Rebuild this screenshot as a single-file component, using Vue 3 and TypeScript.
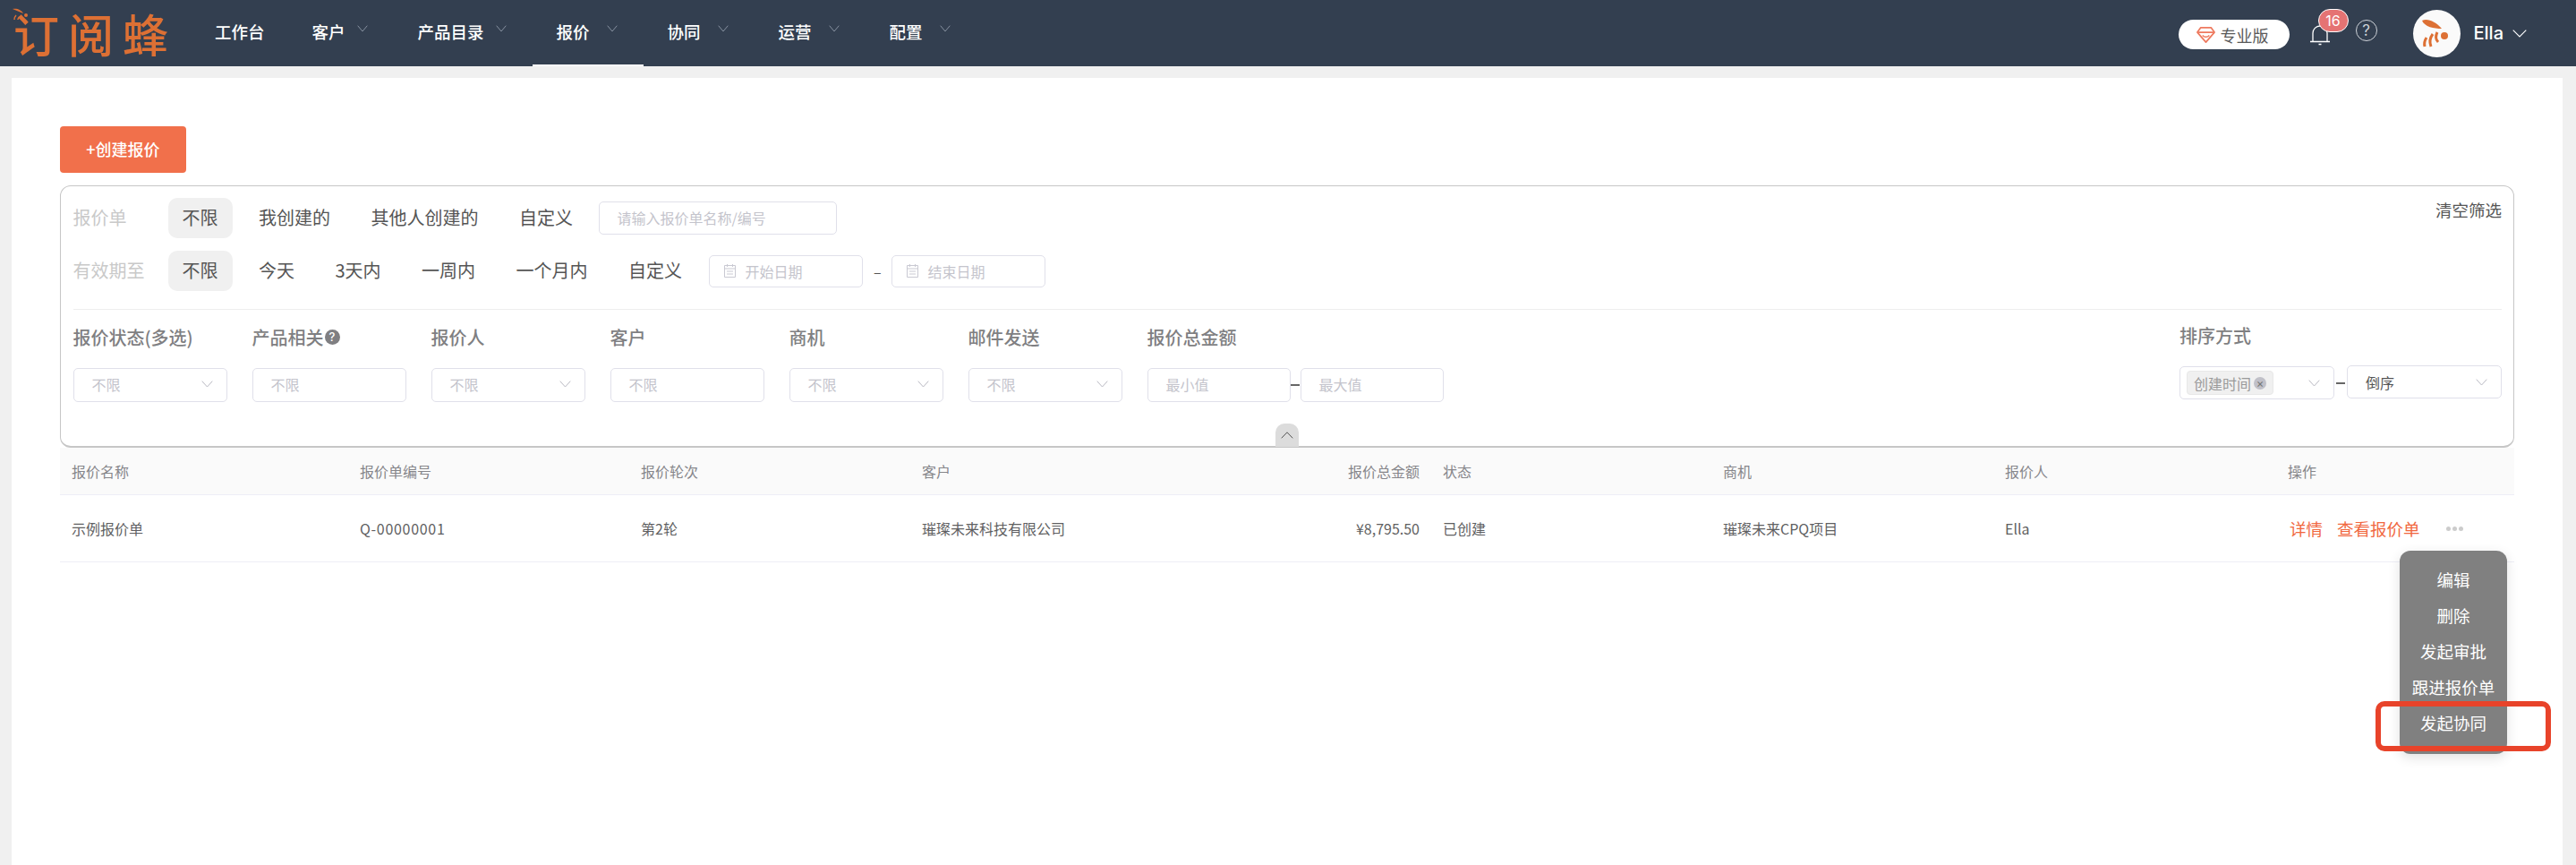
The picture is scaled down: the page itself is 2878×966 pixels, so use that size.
<script setup lang="ts">
const navItems = [
  { text: '客户', gap: 'gap-sm' },
  { text: '产品目录', gap: 'gap-sm' },
  { text: '报价', gap: 'gap-lg', active: true },
  { text: '协同', gap: 'gap-lg' },
  { text: '运营', gap: 'gap-lg' },
  { text: '配置', gap: 'gap-lg' },
]
const rowOne = ['我创建的', '其他人创建的', '自定义']
const rowTwo = ['今天', '3天内', '一周内', '一个月内', '自定义']
const fields = [
  { label: '报价状态(多选)', arrow: true },
  { label: '产品相关', arrow: false, help: true },
  { label: '报价人', arrow: true },
  { label: '客户', arrow: false },
  { label: '商机', arrow: true },
  { label: '邮件发送', arrow: true },
]
const columns = ['报价名称', '报价单编号', '报价轮次', '客户', '报价总金额', '状态', '商机', '报价人', '操作']
const cells = ['示例报价单', 'Q-00000001', '第2轮', '璀璨未来科技有限公司', '¥8,795.50', '已创建', '璀璨未来CPQ项目', 'Ella']
const menu = ['编辑', '删除', '发起审批', '跟进报价单', '发起协同']
</script>

<template>
  <div class="page">
    <header class="topbar">
      <div class="logo">
        <span class="logo-text">订阅蜂</span>
        <svg class="logo-wave" width="20" height="20" viewBox="0 0 20 20" fill="none">
          <path d="M1 2c5-1 10 1 12 5-4-2-8-3-12-5z" fill="#dd7034" />
          <path d="M3 14c0-2 1-4 2-5M7 14c0-1 1-3 2-3" stroke="#dd7034" stroke-width="1.5" />
          <circle cx="16" cy="9" r="2" fill="#dd7034" />
        </svg>
      </div>
      <nav class="nav">
        <a class="nav-item plain">工作台</a>
        <a v-for="item in navItems" :key="item.text" class="nav-item" :class="[item.gap, { active: item.active }]">
          <span>{{ item.text }}</span>
          <svg class="nav-chev" width="12" height="8" viewBox="0 0 12 8" fill="none"><path d="M.7.7 6 7l5.3-6.3" stroke="#8791a0" stroke-width="1" /></svg>
        </a>
      </nav>
      <div class="top-right">
        <div class="pro-pill">
          <svg width="22" height="22" viewBox="0 0 22 22" fill="none">
            <path d="M5 3h12l4 5.5L11 20 1 8.500z" stroke="#ee7a5f" stroke-width="1.800" stroke-linejoin="round" />
            <path d="M1.500 8.500h19M7 12c2 2.500 6 2.500 8 0" stroke="#ee7a5f" stroke-width="1.600" />
          </svg>
          <span>专业版</span>
        </div>
        <div class="bell-wrap">
          <svg width="24" height="26" viewBox="0 0 24 26" fill="none">
            <path d="M4 20V11a8 8 0 0 1 16 0v9M1 20.500h22" stroke="#fff" stroke-width="1.300" />
            <path d="M10.500 23.500h3" stroke="#fff" stroke-width="1.500" />
          </svg>
          <span class="badge">16</span>
        </div>
        <span class="help">?</span>
        <div class="avatar">
          <svg width="36" height="36" viewBox="0 0 36 36" fill="none">
            <path d="M2 4c6-3 15 1 22 9C15 13 5 11 2 4z" fill="#dd7034" />
            <circle cx="27" cy="21" r="4" fill="#dd7034" />
            <path d="M5 33c-1-4 0-7 2-10M12 33c-2-5-1-10 2-14M20 28c-3-3-3-7-1-11" stroke="#dd7034" stroke-width="3" />
          </svg>
        </div>
        <span class="user">Ella</span>
        <svg width="16" height="9" viewBox="0 0 16 9" fill="none"><path d="M.7.700 8 8l7.300-7.300" stroke="#fff" stroke-width="1.100" /></svg>
      </div>
    </header>

    <main class="card">
      <button class="create">+创建报价</button>

      <section class="filter">
        <div class="quick-row">
          <span class="quick-label">报价单</span>
          <span class="chip selected">不限</span>
          <span v-for="t in rowOne" :key="t" class="chip">{{ t }}</span>
          <div class="box name-box">请输入报价单名称/编号</div>
          <span class="clear">清空筛选</span>
        </div>
        <div class="quick-row">
          <span class="quick-label">有效期至</span>
          <span class="chip selected">不限</span>
          <span v-for="t in rowTwo" :key="t" class="chip">{{ t }}</span>
          <div class="box date-box">
            <svg width="15" height="17" viewBox="0 0 15 17" fill="none"><path d="M1.500 2.500h12v13h-12zM1.500 6h12M4.500 1v3M10.500 1v3M4 9h7M4 12h7" stroke="#c9c9d2" stroke-width="1" /></svg>
            <span>开始日期</span>
          </div>
          <span class="date-dash">–</span>
          <div class="box date-box">
            <svg width="15" height="17" viewBox="0 0 15 17" fill="none"><path d="M1.500 2.500h12v13h-12zM1.500 6h12M4.500 1v3M10.500 1v3M4 9h7M4 12h7" stroke="#c9c9d2" stroke-width="1" /></svg>
            <span>结束日期</span>
          </div>
        </div>

        <div class="divider"></div>

        <div class="fields">
          <div v-for="f in fields" :key="f.label" class="field">
            <div class="field-label">
              {{ f.label }}<span v-if="f.help" class="tip">?</span>
            </div>
            <div class="box select">
              <span>不限</span>
              <svg v-if="f.arrow" width="13" height="8" viewBox="0 0 13 8" fill="none"><path d="M.7.700 6.500 7l5.800-6.300" stroke="#b9b9c2" stroke-width="1" /></svg>
            </div>
          </div>
          <div class="field range">
            <div class="field-label">报价总金额</div>
            <div class="range-row">
              <div class="box range-box">最小值</div>
              <span class="range-dash"></span>
              <div class="box range-box">最大值</div>
            </div>
          </div>
          <div class="field sort">
            <div class="field-label">排序方式</div>
            <div class="sort-row">
              <div class="box sort-box lower">
                <span class="tag">创建时间<i class="tag-x">×</i></span>
                <svg width="13" height="8" viewBox="0 0 13 8" fill="none"><path d="M.7.700 6.500 7l5.800-6.300" stroke="#b9b9c2" stroke-width="1" /></svg>
              </div>
              <span class="range-dash sort-dash"></span>
              <div class="box sort-box order">
                <span>倒序</span>
                <svg width="13" height="8" viewBox="0 0 13 8" fill="none"><path d="M.7.700 6.500 7l5.800-6.300" stroke="#b9b9c2" stroke-width="1" /></svg>
              </div>
            </div>
          </div>
        </div>

        <div class="collapse">
          <svg width="14" height="8" viewBox="0 0 14 8" fill="none"><path d="M.7 7.300 7 .8l6.300 6.500" stroke="#555" stroke-width="1" /></svg>
        </div>
      </section>

      <section class="table">
        <div class="t-row t-head">
          <div v-for="(c, i) in columns" :key="c" class="t-cell" :class="{ right: i === 4 }">{{ c }}</div>
        </div>
        <div class="t-row t-body">
          <div v-for="(c, i) in cells" :key="c" class="t-cell" :class="{ right: i === 4, code: i === 1 }">{{ c }}</div>
          <div class="t-cell actions">
            <a>详情</a>
            <a>查看报价单</a>
            <span class="dots"><i></i><i></i><i></i></span>
            <div class="menu">
              <div v-for="m in menu" :key="m" class="menu-item">{{ m }}</div>
              <div class="highlight"></div>
            </div>
          </div>
        </div>
      </section>
    </main>
  </div>
</template>

<style>
html, body { margin: 0; background: #f0f0f0; }
</style>

<style scoped>
.page {
  width: 2878px;
  height: 966px;
  overflow: hidden;
  background: #f0f0f0;
  font-family: "Noto Sans CJK SC", "Noto Sans", sans-serif;
  color: #555;
}
.topbar {
  height: 74px;
  background: #333f50;
  display: flex;
  align-items: center;
}
.logo {
  width: 213px;
  height: 74px;
  padding: 0 0 0 15px;
  box-sizing: border-box;
  position: relative;
  flex: none;
  display: flex;
  align-items: center;
}
.logo-text {
  font-size: 51px;
  line-height: 74px;
  color: #dd7034;
  font-weight: 500;
  letter-spacing: 10px;
  white-space: nowrap;
}
.logo-wave {
  position: absolute;
  left: 13px;
  top: 8px;
}
.nav { display: flex; height: 74px; }
.nav-item {
  display: flex;
  align-items: center;
  padding: 0 29px 4px 27px;
  font-size: 18.500px;
  font-weight: 500;
  color: #fff;
  box-sizing: border-box;
}
.nav-item.plain { padding-right: 26px; }
.gap-sm .nav-chev { margin-left: 13px; }
.gap-lg .nav-chev { margin-left: 19px; }
.nav-chev { margin-top: -6px; }
.nav-item.active { border-bottom: 2px solid #fff; padding-bottom: 2px; }
.top-right {
  margin-left: auto;
  display: flex;
  align-items: center;
  padding-right: 55px;
}
.pro-pill {
  width: 124px;
  height: 33px;
  border-radius: 17px;
  background: #fff;
  display: flex;
  align-items: center;
  gap: 6px;
  padding-left: 20px;
  box-sizing: border-box;
  font-size: 18px;
  color: #5a5a5a;
  margin-top: 3px;
}
.pro-pill svg { width: 21px; height: 21px; }
.bell-wrap {
  position: relative;
  width: 24px;
  height: 26px;
  margin-left: 22px;
  margin-top: 4px;
}
.badge {
  position: absolute;
  left: 10px;
  top: -16px;
  width: 34px;
  height: 26px;
  box-sizing: border-box;
  border: 1px solid #fff;
  border-radius: 13px;
  background: #e57373;
  color: #fff;
  font-size: 16px;
  line-height: 24px;
  text-align: center;
  font-family: Inter, sans-serif;
}
.help {
  width: 24px;
  height: 24px;
  margin-left: 28px;
  margin-top: -6px;
  box-sizing: border-box;
  border: 1px solid #cfd3d9;
  border-radius: 50%;
  color: #cfd3d9;
  font-size: 17px;
  line-height: 22px;
  text-align: center;
  font-family: Inter, sans-serif;
}
.avatar {
  width: 53px;
  height: 53px;
  margin-left: 40px;
  border-radius: 50%;
  background: #fafafa;
  display: flex;
  align-items: center;
  justify-content: center;
  flex: none;
}
.user {
  margin-left: 15px;
  margin-right: 10px;
  font-family: Inter, sans-serif;
  font-size: 20px;
  font-weight: 500;
  color: #fff;
}
.card {
  margin: 13px 15px 0 13px;
  height: 879px;
  background: #fff;
  padding: 54px 54px 0;
  box-sizing: border-box;
}
.create {
  display: block;
  width: 141px;
  height: 52px;
  border: 0;
  border-radius: 4px;
  background: #f1704b;
  color: #fff;
  font: 500 18px "Noto Sans CJK SC", sans-serif;
  padding: 0 0 2px;
}
.filter {
  margin-top: 14px;
  border: 1px solid #c6c6c6;
  border-bottom-width: 2px;
  border-radius: 12px;
  padding: 13px 13px 0 13.500px;
  box-sizing: border-box;
  height: 293px;
}
.quick-row {
  display: flex;
  align-items: center;
  gap: 13.500px;
  height: 45px;
  font-size: 20px;
  margin-bottom: 14px;
  color: #555;
}
.quick-label {
  width: 92.500px;
  color: #c9c9c9;
  flex: none;
  padding-bottom: 2px;
}
.chip {
  padding: 0 16px;
  height: 45px;
  line-height: 43px;
  border-radius: 10px;
  box-sizing: border-box;
}
.chip.selected { background: #f0f0f0; }
.box {
  border: 1px solid #e0e0ea;
  border-radius: 5px;
  box-sizing: border-box;
  font-size: 16px;
  color: #c4c4cc;
  display: flex;
  align-items: center;
}
.name-box {
  width: 266px;
  height: 37px;
  padding: 0 0 2px 20px;
  margin-left: -1px;
}
.date-box {
  width: 172px;
  height: 36px;
  padding: 0 0 0 15px;
  gap: 10px;
}
.date-dash {
  width: 7px;
  text-align: center;
  font-size: 16px;
  margin: 0 -1px;
}
.clear {
  margin-left: auto;
  align-self: flex-start;
  line-height: 26px;
  font-size: 18.500px;
  color: #555;
}
.divider {
  height: 1px;
  background: #eeeeee;
  margin-top: 20px;
}
.fields {
  display: flex;
  gap: 28px;
  margin-top: 17px;
}
.field { width: 172px; flex: none; }
.field-label {
  height: 28px;
  padding-bottom: 2px;
  box-sizing: border-box;
  font-size: 20px;
  font-weight: 500;
  color: #7f7f82;
  white-space: nowrap;
  display: flex;
  align-items: center;
}
.tip {
  width: 17px;
  height: 17px;
  margin-left: 1px;
  border-radius: 50%;
  background: #7f7f82;
  color: #fff;
  font-size: 13px;
  line-height: 17px;
  text-align: center;
  font-family: Inter, sans-serif;
}
.select {
  height: 38px;
  margin-top: 20px;
  padding: 0 15px 2px 20px;
  justify-content: space-between;
}
.range { width: auto; }
.range-row { display: flex; align-items: center; margin-top: 20px; }
.range-box { width: 160px; height: 38px; padding: 0 0 2px 20px; }
.range-dash {
  width: 10px;
  height: 2px;
  background: #666;
  margin: 0 1px 0 0;
}
.sort { width: auto; margin-left: auto; margin-top: -2px; }
.sort-row { display: flex; align-items: flex-start; margin-top: 19px; }
.sort-dash { margin: 19px 2px 0 2px; }
.sort-box {
  width: 173px;
  height: 37px;
  justify-content: space-between;
  padding-right: 15px;
}
.lower { margin-top: 1px; padding-left: 7px; }
.order { padding-left: 20px; color: #555; }
.tag {
  width: 97px;
  height: 27px;
  box-sizing: border-box;
  background: #f0f0f0;
  border: 1px solid #e8e8e8;
  border-radius: 4px;
  color: #9a9a9a;
  display: flex;
  align-items: center;
  padding-left: 7px;
  white-space: nowrap;
}
.tag-x {
  width: 14px;
  height: 14px;
  margin-left: 3px;
  border-radius: 50%;
  background: #c0c0c8;
  color: #777;
  font-style: normal;
  font-size: 13px;
  line-height: 14px;
  text-align: center;
  font-family: Inter, sans-serif;
}
.collapse {
  width: 26px;
  height: 26px;
  margin: 24px auto 0;
  border-radius: 10px 10px 0 0;
  background: #dcdcdc;
  display: flex;
  align-items: center;
  justify-content: center;
}
.table { margin-top: 0; }
.t-row {
  display: grid;
  grid-template-columns: 322px 314px 314px 300px 282px 313px 315px 316px 266px;
  align-items: center;
  box-sizing: border-box;
  font-size: 16px;
}
.t-cell { padding: 0 13px; white-space: nowrap; }
.t-cell.right { text-align: right; }
.t-cell.code { letter-spacing: 0.700px; }
.t-head {
  height: 53px;
  background: #fafafa;
  border-bottom: 1px solid #eeeef6;
  color: #86868a;
}
.t-body {
  height: 75px;
  border-bottom: 1px solid #eeeef6;
  color: #5f5f62;
}
.actions {
  position: relative;
  display: flex;
  align-items: center;
  padding-left: 15px;
  font-size: 18.500px;
  color: #f1683f;
  height: 74px;
}
.actions a:nth-child(2) { margin-left: 16px; }
.dots { display: flex; gap: 2px; margin-left: 29px; }
.dots i {
  width: 5px;
  height: 5px;
  border-radius: 50%;
  background: #cccccc;
}
.menu {
  position: absolute;
  left: 138px;
  top: 62px;
  width: 120px;
  height: 227px;
  padding-top: 13px;
  box-sizing: border-box;
  background: #808080;
  border-radius: 12px;
  box-shadow: 0 4px 14px rgba(0, 0, 0, 0.12);
  z-index: 2;
}
.menu-item {
  height: 40px;
  line-height: 38px;
  text-align: center;
  color: #fff;
  font-size: 18.500px;
}
.highlight {
  position: absolute;
  left: -27px;
  top: 168px;
  width: 196px;
  height: 56px;
  box-sizing: border-box;
  border: 6px solid #e8432a;
  border-radius: 10px;
}
</style>
